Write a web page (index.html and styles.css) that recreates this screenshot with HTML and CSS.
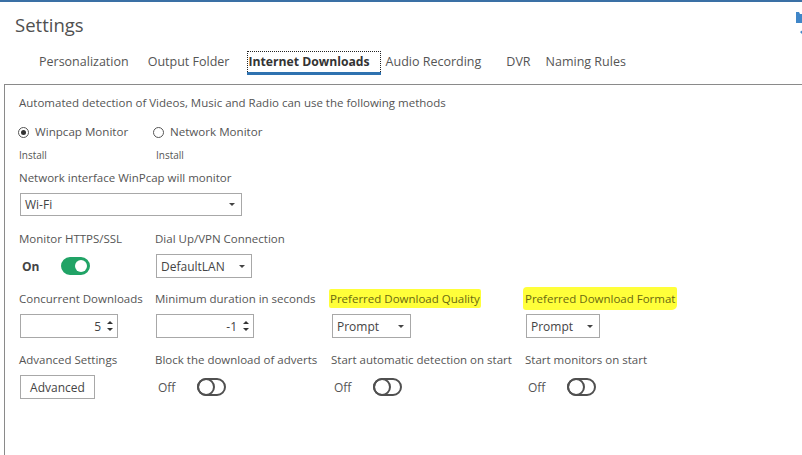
FILE: index.html
```html
<!DOCTYPE html>
<html>
<head>
<meta charset="utf-8">
<link rel="stylesheet" href="styles.css">
</head>
<body>
<div class="app">
  <header class="head">
    <h1 class="title">Settings</h1>
    <svg class="corner" width="6" height="34" viewBox="0 0 6 34"><path d="M0 10 L3 10 L4 12 L6 12 L6 21 L0 21 Z" fill="#3f86c8"/><path d="M4 30 L6 28.5 L6 32 Z" fill="#3f86c8"/></svg>
  </header>
  <nav class="tabs">
    <span class="tab t1">Personalization</span>
    <span class="tab t2">Output Folder</span>
    <span class="tab active">Internet Downloads</span>
    <span class="tab t4">Audio Recording</span>
    <span class="tab t5">DVR</span>
    <span class="tab t6">Naming Rules</span>
  </nav>
  <section class="panel">
    <p class="intro">Automated detection of Videos, Music and Radio can use the following methods</p>
    <div class="cols radios">
      <div class="radio"><span class="dot on"></span>Winpcap Monitor</div>
      <div class="radio"><span class="dot"></span>Network Monitor</div>
    </div>
    <div class="cols installs">
      <span class="install">Install</span>
      <span class="install second">Install</span>
    </div>
    <p class="label iface">Network interface WinPcap will monitor</p>
    <div class="select wide"><span>Wi-Fi</span><span class="caret"></span></div>

    <div class="grid">
      <div class="cell">
        <span class="label">Monitor HTTPS/SSL</span>
        <div class="toggle-row"><b class="state">On</b><span class="switch on"></span></div>
      </div>
      <div class="cell">
        <span class="label">Dial Up/VPN Connection</span>
        <div class="select lan"><span>DefaultLAN</span><span class="caret"></span></div>
      </div>
      <div class="cell"></div>
      <div class="cell"></div>

      <div class="cell">
        <span class="label">Concurrent Downloads</span>
        <div class="spin"><span class="val">5</span><span class="arrows"><i class="up"></i><i class="down"></i></span></div>
      </div>
      <div class="cell">
        <span class="label">Minimum duration in seconds</span>
        <div class="spin"><span class="val">-1</span><span class="arrows"><i class="up"></i><i class="down"></i></span></div>
      </div>
      <div class="cell">
        <span class="label"><mark class="hl">Preferred Download Quality</mark></span>
        <div class="select prompt"><span>Prompt</span><span class="caret"></span></div>
      </div>
      <div class="cell">
        <span class="label"><mark class="hl hl2">Preferred Download Format</mark></span>
        <div class="select prompt2"><span>Prompt</span><span class="caret"></span></div>
      </div>

      <div class="cell r4">
        <span class="label">Advanced Settings</span>
        <div class="btn-row"><span class="button">Advanced</span></div>
      </div>
      <div class="cell r4">
        <span class="label">Block the download of adverts</span>
        <div class="toggle-row off"><span class="state">Off</span><span class="switch"></span></div>
      </div>
      <div class="cell r4">
        <span class="label">Start automatic detection on start</span>
        <div class="toggle-row off"><span class="state">Off</span><span class="switch"></span></div>
      </div>
      <div class="cell r4">
        <span class="label">Start monitors on start</span>
        <div class="toggle-row off"><span class="state">Off</span><span class="switch"></span></div>
      </div>
    </div>
  </section>
</div>
</body>
</html>
```

FILE: styles.css
```css
* { box-sizing: border-box; }
html, body { margin: 0; padding: 0; background: #fff; }
body {
  font-family: "Open Sans", "Noto Sans", sans-serif;
  font-size: 11.5px;
  color: #555;
  width: 802px;
  height: 455px;
  overflow: hidden;
}
.app {
  border-top: 2px solid #3a70a5;
  height: 455px;
  display: flex;
  flex-direction: column;
}
.head {
  display: flex;
  justify-content: space-between;
  align-items: flex-start;
  height: 40px;
}
.title {
  margin: 10px 0 0 15px;
  font-weight: 400;
  font-size: 18.5px;
  line-height: 26px;
  color: #505050;
}
.corner { display: block; }
.tabs {
  display: flex;
  align-items: flex-start;
  padding-left: 33px;
  height: 42px;
  padding-top: 9px;
}
.tab {
  font-size: 12.5px;
  line-height: 20px;
  padding: 0 5px;
  color: #555;
  border: 1px solid transparent;
  white-space: nowrap;
}
.t1 { margin-right: 7px; }
.t2 { margin-right: 12px; padding-right: 5px; }
.t4 { margin-right: 13px; padding-left: 4px; }
.t5 { margin-right: 3px; }
.tab.active {
  font-weight: 700;
  font-size: 12.2px;
  color: #333;
  border: 1px dotted #222;
  border-bottom: none;
  box-shadow: 0 3px 0 #2f72b0;
  margin-right: 0;
  padding: 0 10px 0 0;
}
.panel {
  flex: 1;
  margin-left: 4px;
  border-top: 1px solid #8a8a8a;
  border-left: 1px solid #8a8a8a;
  padding: 10px 0 0 14px;
}
.intro, .label {
  margin: 0;
  line-height: 16px;
  white-space: nowrap;
}
.cols {
  display: grid;
  grid-template-columns: 135px 200px;
}
.radios { margin-top: 12px; line-height: 18px; font-size: 11.6px; }
.radio { display: flex; align-items: center; }
.dot {
  width: 11px; height: 11px;
  border: 1px solid #555;
  border-radius: 50%;
  margin-right: 6px;
  margin-left: -1px;
  display: inline-flex;
  align-items: center;
  justify-content: center;
}
.dot.on::after {
  content: "";
  width: 5px; height: 5px;
  border-radius: 50%;
  background: #333;
}
.installs { margin-top: 7px; font-size: 10px; line-height: 14px; }
.install.second { padding-left: 2px; }
.iface { margin-top: 8px; }
.select {
  border: 1px solid #a8a8a8;
  height: 23px;
  display: flex;
  align-items: center;
  justify-content: space-between;
  padding: 0 6px 0 4px;
  font-size: 12px;
  color: #444;
}
.select.wide { width: 222px; margin: 7px 0 0 1px; }
.select.lan { width: 96px; height: 24px; }
.select.prompt { width: 79px; height: 24px; }
.select.prompt2 { width: 74px; height: 24px; }
.caret {
  width: 0; height: 0;
  border-left: 3px solid transparent;
  border-right: 3px solid transparent;
  border-top: 3px solid #444;
}
.grid {
  display: grid;
  grid-template-columns: 136px 176px 194px 1fr;
  row-gap: 13px;
  margin-top: 15px;
}
.cell {
  display: flex;
  flex-direction: column;
  gap: 7px;
  padding-left: 1px;
}
.cell.r4 { margin-top: 1px; }
.cell > .label { margin-left: -1px; }
.toggle-row {
  display: flex;
  align-items: center;
  height: 24px;
  padding-left: 2px;
}
.state { width: 39px; font-size: 12px; }
b.state { color: #444; }
.switch {
  width: 29px; height: 18px;
  border-radius: 9px;
  border: 2px solid #505050;
  position: relative;
}
.switch::after {
  content: "";
  position: absolute;
  left: -2px; top: -2px;
  width: 18px; height: 18px;
  box-sizing: border-box;
  border: 2px solid #505050;
  border-radius: 50%;
}
.switch.on {
  background: #21a366;
  border-color: #21a366;
}
.switch.on::after {
  left: auto; right: 1px; top: 1px;
  width: 12px; height: 12px;
  border: none;
  background: #fff;
}
.spin {
  width: 98px; height: 24px;
  border: 1px solid #a8a8a8;
  display: flex;
  align-items: center;
  justify-content: flex-end;
  font-size: 12px;
  color: #444;
  padding-right: 4px;
}
.val { margin-right: 6px; }
.arrows { display: flex; flex-direction: column; gap: 4px; }
.arrows i {
  width: 0; height: 0;
  border-left: 3px solid transparent;
  border-right: 3px solid transparent;
}
.arrows .up { border-bottom: 3px solid #333; }
.arrows .down { border-top: 3px solid #333; }
.hl {
  background: #ffff3a;
  color: #6a6a10;
  padding: 2px 1px 2px 1px;
  margin-left: -2px;
  border-radius: 2px;
}
.hl2 { padding: 4px 2px; border-radius: 4px 2px 5px 3px; }
.btn-row { height: 24px; display: flex; }
.button {
  border: 1px solid #a8a8a8;
  width: 75px;
  display: flex;
  align-items: center;
  justify-content: center;
  font-size: 12px;
  color: #444;
}
```
